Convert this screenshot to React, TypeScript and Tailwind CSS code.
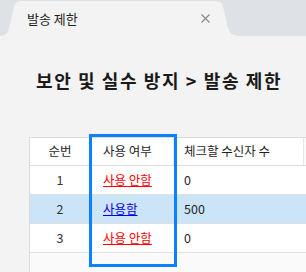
const font = "font-['Noto_Sans_CJK_KR','Noto_Sans',sans-serif]";

type Row = { no: number; used: boolean; count: string; selected?: boolean };

const rows: Row[] = [
  { no: 1, used: false, count: "0" },
  { no: 2, used: true, count: "500", selected: true },
  { no: 3, used: false, count: "0" },
];

function Tab() {
  return (
    <div className="relative h-[36px] w-[240px]">
      <svg className="absolute inset-0" width="240" height="36" viewBox="0 0 240 36">
        <path
          d="M0 36 Q8 36 9 28 L14 7 Q15 1 21 1 L216 1 Q222 1 223 7 L228 28 Q230 36 239 36 Z"
          fill="#f3f3f3"
        />
      </svg>
      <div className="relative flex h-full items-center pl-[27px] pr-[30px] pt-px">
        <span className="text-[13px] text-[#1f1f1f]">발송 제한</span>
        <svg className="ml-auto" width="9" height="9" viewBox="0 0 9 9">
          <path d="M0.5 0.5 L8.5 8.5 M8.5 0.5 L0.5 8.5" stroke="#8a8a8a" strokeWidth="1.2" />
        </svg>
      </div>
    </div>
  );
}

export default function App() {
  return (
    <div className={`h-[272px] w-[306px] overflow-hidden bg-[#f3f3f3] ${font}`}>
      <div className="flex h-[36px] bg-[#dee1e6]">
        <Tab />
      </div>

      <h1 className="mt-[31px] pl-[36px] text-[18px] font-bold leading-[26px] tracking-[1.6px] text-[#1a1a1a]">
        보안 및 실수 방지 &gt; 발송 제한
      </h1>

      <div className="relative ml-[29px] mt-[44px] h-[200px] border-l border-[#dcdcdc] bg-[#fafafa] text-[12.5px] text-[#1f1f1f]">
        <div className="flex h-[29px] border-b border-t border-[#dcdcdc] bg-white">
          <div className="flex w-[60px] items-center justify-center">순번</div>
          <div className="flex w-[83px] items-center border-l border-[#e6e6e6] pl-[12px]">사용 여부</div>
          <div className="flex w-[130px] items-center border-l border-[#e6e6e6] pl-[10px]">체크할 수신자 수</div>
          <div className="flex-1 border-l border-[#e6e6e6] bg-[#fafafa]" />
        </div>
        {rows.map((r) => (
          <div
            key={r.no}
            className={`flex h-[29px] border-b border-[#e0e0e0] ${r.selected ? "bg-[#cce4f7]" : "bg-white"}`}
          >
            <div className="flex w-[60px] items-center justify-center text-[#333]">{r.no}</div>
            <div className="flex w-[83px] items-center pl-[13px]">
              {r.used ? (
                <a className="text-[#0000ee] underline">사용함</a>
              ) : (
                <a className="text-[#ff0000] underline">사용 안함</a>
              )}
            </div>
            <div className="flex w-[130px] items-center pl-[11px]">{r.count}</div>
          </div>
        ))}

        <div className="absolute left-[59px] top-[-3px] h-[133px] w-[88px] border-[3px] border-[#0a82ff]" />
      </div>
    </div>
  );
}
